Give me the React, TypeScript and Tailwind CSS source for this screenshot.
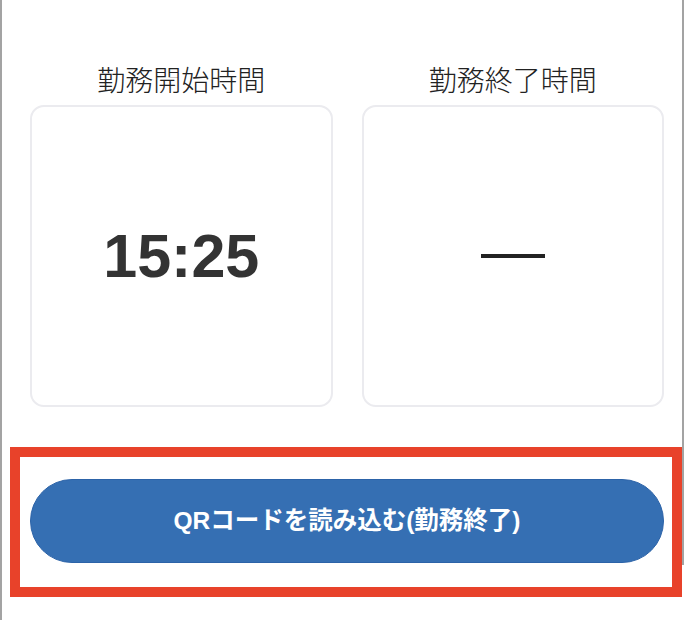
export default function App() {
  const slots = [
    { id: "start", label: "勤務開始時間", value: "15:25" },
    { id: "end", label: "勤務終了時間", value: null },
  ];

  return (
    <div
      className="relative w-[684px] h-[620px] overflow-hidden bg-white border-l-2 border-[#a3a3a3]"
      style={{ fontFamily: '"Liberation Sans", "Noto Sans CJK JP", sans-serif' }}
    >
      {/* frame edge on the right */}
      <div className="absolute right-0 top-0 h-[565px] w-[2px] bg-[#a3a3a3]" />

      <div className="pl-[28px] pr-[20px] pt-[62px]">
        <div className="grid grid-cols-2 gap-[29px]">
          {slots.map((slot) => (
            <div key={slot.id} className="flex flex-col">
              <div className="text-center text-[28px] leading-[40px] font-light text-[#222]">
                {slot.label}
              </div>
              <div className="mt-[3px] h-[302px] rounded-[14px] border-2 border-[#ebebef] flex items-center justify-center">
                {slot.value ? (
                  <span className="text-[61px] leading-none font-bold text-[#333]">
                    {slot.value}
                  </span>
                ) : (
                  <span className="block h-[4px] w-[64px] bg-[#222]" />
                )}
              </div>
            </div>
          ))}
        </div>

        <div className="-ml-[20px] -mr-[18px] mt-[40px] border-[10px] border-[#e8422a] pl-[10px] pr-[8px] pt-[22px] pb-[24px]">
          <button className="w-full h-[84px] rounded-full bg-[#356fb3] border border-[#2c63a8] text-white text-[24.5px] font-bold flex items-center justify-center">
            QRコードを読み込む(勤務終了)
          </button>
        </div>
      </div>
    </div>
  );
}
